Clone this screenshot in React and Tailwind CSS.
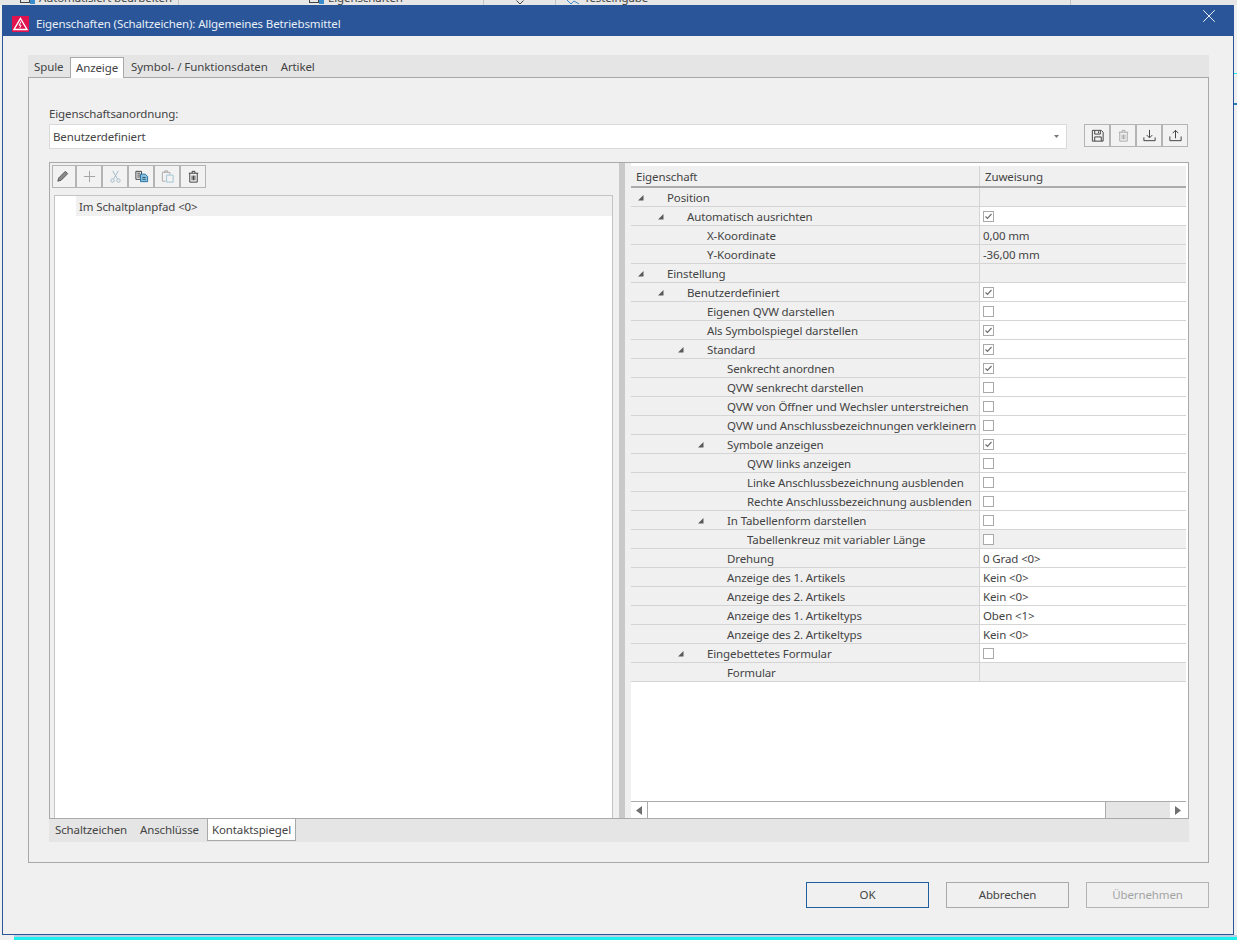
import React from "react";
import { X } from "lucide-react";

const font = { fontFamily: '"Noto Sans", "Open Sans", sans-serif' };

const indent = ["pl-[5px]", "pl-[25px]", "pl-[45px]", "pl-[65px]", "pl-[85px]"];

const rows = [
  { name: "Position", level: 0, open: true, gray: true },
  { name: "Automatisch ausrichten", level: 1, open: true, check: true },
  { name: "X-Koordinate", level: 2, value: "0,00 mm", gray: true },
  { name: "Y-Koordinate", level: 2, value: "-36,00 mm", gray: true },
  { name: "Einstellung", level: 0, open: true, gray: true },
  { name: "Benutzerdefiniert", level: 1, open: true, check: true },
  { name: "Eigenen QVW darstellen", level: 2, check: false },
  { name: "Als Symbolspiegel darstellen", level: 2, check: true },
  { name: "Standard", level: 2, open: true, check: true },
  { name: "Senkrecht anordnen", level: 3, check: true },
  { name: "QVW senkrecht darstellen", level: 3, check: false },
  { name: "QVW von Öffner und Wechsler unterstreichen", level: 3, check: false },
  { name: "QVW und Anschlussbezeichnungen verkleinern", level: 3, check: false },
  { name: "Symbole anzeigen", level: 3, open: true, check: true },
  { name: "QVW links anzeigen", level: 4, check: false },
  { name: "Linke Anschlussbezeichnung ausblenden", level: 4, check: false },
  { name: "Rechte Anschlussbezeichnung ausblenden", level: 4, check: false },
  { name: "In Tabellenform darstellen", level: 3, open: true, check: false },
  { name: "Tabellenkreuz mit variabler Länge", level: 4, check: false, gray: true },
  { name: "Drehung", level: 3, value: "0 Grad <0>" },
  { name: "Anzeige des 1. Artikels", level: 3, value: "Kein <0>" },
  { name: "Anzeige des 2. Artikels", level: 3, value: "Kein <0>" },
  { name: "Anzeige des 1. Artikeltyps", level: 3, value: "Oben <1>" },
  { name: "Anzeige des 2. Artikeltyps", level: 3, value: "Kein <0>" },
  { name: "Eingebettetes Formular", level: 2, open: true, check: false },
  { name: "Formular", level: 3, gray: true },
];

const Icon = ({ children, size = 15, color = "#3c3c3c" }) => (
  <svg width={size} height={size} viewBox="0 0 16 16" fill="none" stroke={color} strokeWidth="1">
    {children}
  </svg>
);

const ToolButton = ({ children, narrow }) => (
  <button className={`${narrow ? "w-[24px] pr-[3px]" : "w-[26px]"} h-[23px] border border-[#b4b4b4] flex items-center justify-center bg-[#f2f2f2]`}>
    {children}
  </button>
);

const Checkbox = ({ checked }) => (
  <span className="w-[11px] h-[11px] border border-[#a9a9a9] bg-white flex items-center justify-center">
    {checked && (
      <svg width="9" height="9" viewBox="0 0 9 9" fill="none" stroke="#707070" strokeWidth="1.2">
        <path d="M1.5 4.5 L3.5 6.5 L7.5 2" />
      </svg>
    )}
  </span>
);

const PropertyRow = ({ row }) => (
  <div className="h-[19px] flex border-b border-[#d4d4d4] leading-[20px]">
    <div className={`w-[349px] shrink-0 flex bg-[#f0f0f0] border-r border-[#d4d4d4] whitespace-nowrap ${indent[row.level]}`}>
      <span className="w-[31px] shrink-0 flex items-center pl-[1px]">
        {row.open && (
          <svg width="7" height="7" viewBox="0 0 7 7">
            <polygon points="6.5,1 6.5,6.5 1,6.5" fill="#595959" />
          </svg>
        )}
      </span>
      <span>{row.name}</span>
    </div>
    <div className={`flex-1 flex items-center pl-[3px] ${row.gray ? "bg-[#f0f0f0]" : "bg-white"}`}>
      {row.check !== undefined && <Checkbox checked={row.check} />}
      {row.value && <span className="mt-[2px]">{row.value}</span>}
    </div>
  </div>
);

const App = () => {
  return (
    <div className="relative w-[1237px] h-[940px] overflow-hidden bg-[#f0f0f0] text-[#444444] text-[11.5px] tracking-[-0.12px] pt-[5px] pl-[2px]" style={font}>
      <div className="absolute top-0 left-0 w-full h-[5px] bg-[#e6e6e6] overflow-hidden">
        <span className="absolute left-[20px] top-0 w-[10px] h-[3px] border-x border-b border-[#444444]" />
        <span className="absolute left-[30px] top-0 w-[5px] h-[4px] bg-[#3b8ccc]" />
        <span className="absolute left-[39px] top-[-11px] whitespace-nowrap">Automatisiert bearbeiten</span>
        <span className="absolute left-[178px] top-0 w-px h-full bg-[#c4c4c4]" />
        <span className="absolute left-[309px] top-0 w-[10px] h-[3px] border-x border-b border-[#444444]" />
        <span className="absolute left-[319px] top-0 w-[5px] h-[4px] bg-[#3b8ccc]" />
        <span className="absolute left-[328px] top-[-11px] whitespace-nowrap">Eigenschaften</span>
        <span className="absolute left-[483px] top-0 w-px h-full bg-[#c4c4c4]" />
        <svg width="8" height="5" viewBox="0 0 8 5" className="absolute left-[516px] top-0" fill="none" stroke="#444444">
          <path d="M0.5 0.5 L4 4 L7.5 0.5" />
        </svg>
        <span className="absolute left-[555px] top-0 w-px h-full bg-[#c4c4c4]" />
        <svg width="14" height="5" viewBox="0 0 14 5" className="absolute left-[566px] top-0" fill="none" stroke="#3b8ccc">
          <path d="M1 0 L5 4 L8 1 L13 4" />
        </svg>
        <span className="absolute left-[584px] top-[-11px] whitespace-nowrap">Testeingabe</span>
        <span className="absolute left-[1070px] top-0 w-px h-full bg-[#c4c4c4]" />
      </div>
      <div className="absolute left-[14px] right-0 bottom-[3px] h-[2px] bg-[#bcd0e2]" />
      <div className="absolute left-[14px] right-0 bottom-0 h-[3px] bg-[#1ef0f0]" />
      <div className="absolute right-0 top-[73px] w-[3px] h-px bg-[#1ef0f0]" />
      <div className="absolute right-0 top-[103px] w-[3px] h-[2px] bg-[#2a7fb8]" />

      <div className="relative w-[1232px] h-[930px] border-x border-b border-[#2a5699] bg-[#f0f0f0] flex flex-col">
        <div className="h-[31px] shrink-0 bg-[#2a5699] flex items-center pl-[9px] pr-[13px] pt-[6px] text-[#e9eff7]">
          <svg width="17" height="16" viewBox="0 0 17 16" className="shrink-0">
            <rect width="17" height="16" fill="#e0134f" />
            <path d="M8.5 2.5 L15 13.5 H2 Z" fill="none" stroke="#ffffff" strokeWidth="1.4" />
            <path d="M9 5.5 L7 9.2 H9 L7.8 12" fill="none" stroke="#ffffff" strokeWidth="1" />
          </svg>
          <span className="ml-[7px] flex-1">Eigenschaften (Schaltzeichen): Allgemeines Betriebsmittel</span>
          <X size={22} strokeWidth={1} color="#ffffff" className="mb-[15px]" />
        </div>

        <div className="flex-1 pl-[25px] pr-[24px] pt-[19px] flex flex-col">
          <div className="h-[22px] bg-[#e5e5e5] flex pl-[6px] pt-[2px] shrink-0 relative z-10">
            <span className="w-[36px] leading-[20px]">Spule</span>
            <span className="w-[54px] h-[21px] bg-white border-x border-t border-[#a9a9a9] text-center leading-[20px]">Anzeige</span>
            <span className="ml-[7px] leading-[20px] tracking-[-0.06px]">Symbol- / Funktionsdaten</span>
            <span className="ml-[13px] leading-[20px]">Artikel</span>
          </div>

          <div className="h-[786px] border border-[#a9a9a9] pl-[20px] pr-[19px] flex flex-col">
            <div className="mt-[27px] mb-[1px] h-[18px] leading-[18px]">Eigenschaftsanordnung:</div>
            <div className="flex items-start">
              <div className="w-[1018px] h-[25px] bg-white border border-[#dadada] flex items-center justify-between pl-[3px] pr-[7px]">
                <span>Benutzerdefiniert</span>
                <svg width="5" height="3" viewBox="0 0 5 3">
                  <polygon points="0,0 5,0 2.5,3" fill="#777777" />
                </svg>
              </div>
              <div className="ml-[17px] flex">
                <ToolButton>
                  <Icon>
                    <path d="M2.5 2.5 H12 L14 4.5 V14 H2.5 Z M5 2.5 V6.5 H11 V2.5 M9 3.5 V5.5 M5 14 V9.5 H12 V14" />
                  </Icon>
                </ToolButton>
                <ToolButton>
                  <Icon color="#a8a8a8">
                    <path d="M3 4.5 H13 M6.5 4.5 V2.5 H9.5 V4.5 M4 4.5 V14 H12 V4.5 M6.5 7 V12 M8 7 V12 M9.5 7 V12" />
                  </Icon>
                </ToolButton>
                <ToolButton>
                  <Icon>
                    <path d="M8 2 V10 M5 7.5 L8 10.5 L11 7.5 M2 10 V13.5 H14 V10" />
                  </Icon>
                </ToolButton>
                <ToolButton>
                  <Icon>
                    <path d="M8 11 V2.5 M5 5.5 L8 2.5 L11 5.5 M2 9 V13.5 H14 V9" />
                  </Icon>
                </ToolButton>
              </div>
            </div>

            <div className="mt-[13px] h-[657px] border border-[#a9a9a9] flex">
              <div className="w-[569px] shrink-0 pl-[2px] pt-[2px] flex flex-col">
                <div className="flex h-[23px]">
                  <ToolButton narrow>
                    <Icon color="#555555">
                      <path d="M3 13 L4 9.5 L11 2.5 L13.5 5 L6.5 12 Z" fill="#8a8a8a" />
                    </Icon>
                  </ToolButton>
                  <ToolButton>
                    <Icon color="#a0a0a0">
                      <path d="M8 2 V14 M2 8 H14" />
                    </Icon>
                  </ToolButton>
                  <ToolButton>
                    <Icon color="#9fb9c6">
                      <path d="M5 2 L10 10.5 M11 2 L6 10.5" />
                      <circle cx="4.8" cy="12.3" r="1.8" />
                      <circle cx="11.2" cy="12.3" r="1.8" />
                    </Icon>
                  </ToolButton>
                  <ToolButton>
                    <Icon color="#3b3b3b">
                      <path d="M2 2.5 H8 V11 H2 Z M3.5 4.5 H6.5 M3.5 6.5 H6.5 M3.5 8.5 H6.5" />
                      <path d="M7 5.5 H12 L14.5 8 V13.5 H7 Z" fill="#8cc2e0" stroke="#1f6f9f" />
                      <path d="M9 9 H12.5 M9 11 H12.5" stroke="#1f4f6f" />
                    </Icon>
                  </ToolButton>
                  <ToolButton>
                    <Icon color="#a8a8a8">
                      <path d="M6 13 H2.5 V3.5 H10.5 V6 M5 3.5 V2 H8 V3.5" />
                      <path d="M7 6.5 H14 V14 H7 Z" stroke="#9fc4d8" />
                    </Icon>
                  </ToolButton>
                  <ToolButton>
                    <Icon>
                      <path d="M3 4.5 H13 M6.5 4.5 V2.5 H9.5 V4.5 M4 4.5 V14 H12 V4.5 M6.5 7 V12 M8 7 V12 M9.5 7 V12" />
                    </Icon>
                  </ToolButton>
                </div>
                <div className="ml-[2px] mr-[6px] mt-[7px] flex-1 border border-[#c4c4c4] border-b-0 bg-white pl-[21px]">
                  <div className="h-[20px] leading-[21px] bg-[#f0f0f0] pl-[3px]">Im Schaltplanpfad &lt;0&gt;</div>
                </div>
              </div>
              <div className="w-[6px] shrink-0 bg-[#c9c9c9]" />
              <div className="w-[6px] shrink-0" />
              <div className="flex-1 flex flex-col pr-[2px] pt-[3px] bg-white">
                <div className="h-[22px] shrink-0 flex bg-[#f0f0f0] border-b-2 border-[#ababab] leading-[22px]">
                  <span className="w-[349px] pl-[5px] border-r border-[#d4d4d4]">Eigenschaft</span>
                  <span className="pl-[5px]">Zuweisung</span>
                </div>
                <div className="flex-1">
                  {rows.map((row) => (
                    <PropertyRow key={row.name} row={row} />
                  ))}
                </div>
                <div className="h-[17px] shrink-0 flex border-t border-[#ababab]">
                  <span className="w-[17px] border-r border-[#ababab] flex items-center justify-center">
                    <svg width="6" height="9" viewBox="0 0 6 9">
                      <polygon points="6,0 6,9 0,4.5" fill="#707070" />
                    </svg>
                  </span>
                  <span className="w-[458px] border-r border-[#ababab]" />
                  <span className="flex-1 bg-[#e5e5e5]" />
                  <span className="w-[16px] flex items-center justify-center">
                    <svg width="6" height="9" viewBox="0 0 6 9">
                      <polygon points="0,0 0,9 6,4.5" fill="#707070" />
                    </svg>
                  </span>
                </div>
              </div>
            </div>

            <div className="h-[23px] bg-[#e5e5e5] flex pl-[6px]">
              <span className="w-[85px] leading-[21px]">Schaltzeichen</span>
              <span className="w-[67px] leading-[21px]">Anschlüsse</span>
              <span className="w-[89px] h-[22px] bg-white border-x border-b border-[#a9a9a9] text-center leading-[21px]">Kontaktspiegel</span>
            </div>
          </div>

          <div className="mt-[19px] flex justify-end gap-[17px]">
            <button className="w-[123px] h-[26px] border border-[#1f5f9f] bg-[#f0f0f0]">OK</button>
            <button className="w-[123px] h-[26px] border border-[#a9a9a9] bg-[#f0f0f0]">Abbrechen</button>
            <button className="w-[123px] h-[26px] border border-[#b4b4b4] bg-[#f0f0f0] text-[#a3a3a3]">Übernehmen</button>
          </div>
        </div>
      </div>
    </div>
  );
};

export default App;
